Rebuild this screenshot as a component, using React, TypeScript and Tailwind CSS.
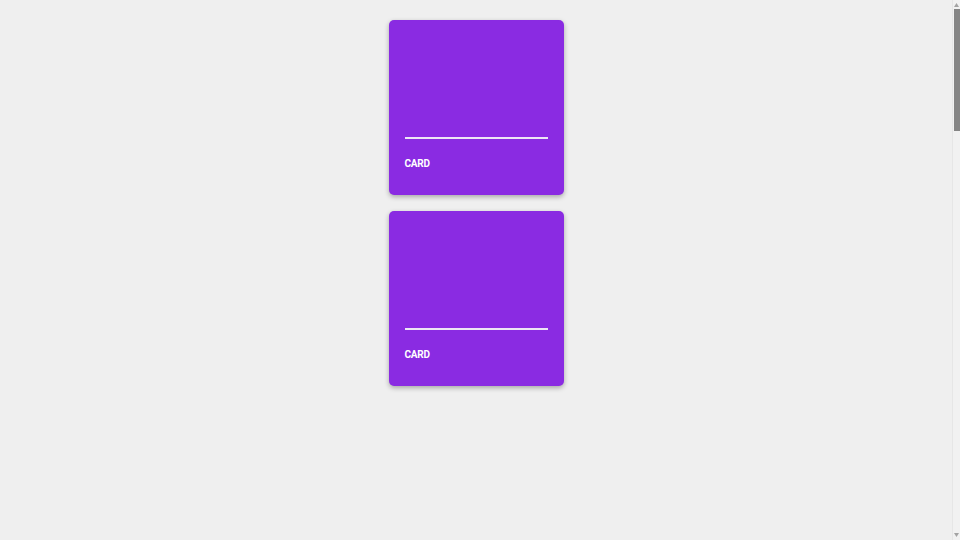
import React from "react";

function Card() {
  return (
    <div className="w-[175px] h-[175px] shrink-0 rounded-[5px] bg-[#8a2be2] shadow-[0_2px_5px_rgba(0,0,0,0.3)] px-4 pt-[117px]">
      <div className="h-[2px] bg-[#ece6f4]" />
      <div className="mt-[20px] text-[10px] font-bold leading-none text-white tracking-[-0.2px]" style={{ fontFamily: "Roboto, 'Liberation Sans', sans-serif" }}>
        CARD
      </div>
    </div>
  );
}

function Scrollbar() {
  return (
    <div className="w-2 h-full shrink-0 bg-[#f1f1f1] border-l border-[#e6e6e6] flex flex-col items-center">
      <svg width="5" height="4" viewBox="0 0 5 4" className="mt-[3px]">
        <path d="M2.5 0 L5 4 L0 4 Z" fill="#a3a3a3" />
      </svg>
      <div className="mt-[2px] w-[6px] h-[122px] bg-[#858585]" />
      <div className="flex-1" />
      <svg width="5" height="4" viewBox="0 0 5 4" className="mb-[3px]">
        <path d="M0 0 L5 0 L2.5 4 Z" fill="#a3a3a3" />
      </svg>
    </div>
  );
}

export default function App() {
  return (
    <div className="h-screen flex bg-[#efefef] overflow-hidden" style={{ fontFamily: "Roboto, sans-serif" }}>
      <main className="flex-1 flex flex-col items-center pt-5 gap-4">
        <Card />
        <Card />
      </main>
      <Scrollbar />
    </div>
  );
}
